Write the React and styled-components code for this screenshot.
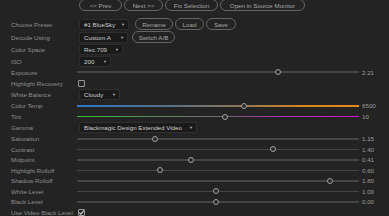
import React from "react";
import styled, { createGlobalStyle } from "styled-components";

const GlobalStyle = createGlobalStyle`
  html, body {
    margin: 0;
    padding: 0;
    background: #232323;
    overflow: hidden;
  }
  body {
    font-family: "Liberation Sans", Arial, sans-serif;
  }
`;

const sliders = {
  exposure: { pos: 0.713, value: "2.21" },
  temp: { pos: 0.592, value: "6500" },
  tint: { pos: 0.525, value: "10" },
  saturation: { pos: 0.277, value: "1.15" },
  contrast: { pos: 0.695, value: "1.40" },
  midpoint: { pos: 0.404, value: "0.41" },
  hiRolloff: { pos: 0.294, value: "0.60" },
  shRolloff: { pos: 0.897, value: "1.80" },
  white: { pos: 0.493, value: "1.00" },
  black: { pos: 0.493, value: "0.00" },
};

function Dropdown({ w, children }) {
  return (
    <Select $w={w}>
      <span>{children}</span>
      <Arrow>▼</Arrow>
    </Select>
  );
}

function Slider({ pos, value, track }) {
  return (
    <SliderWrap>
      <Track $bg={track}>
        <Thumb style={{ left: `${pos * 100}%` }} />
      </Track>
      <Value>{value}</Value>
    </SliderWrap>
  );
}

function Check({ checked }) {
  return (
    <Box>
      {checked && (
        <svg width="7" height="7" viewBox="0 0 7 7">
          <path d="M1.3 3.6 L2.9 5.1 L5.8 1.6" fill="none" stroke="#d8d8d8" strokeWidth="1.1" />
        </svg>
      )}
    </Box>
  );
}

export default function App() {
  return (
    <Panel>
      <GlobalStyle />
      <TopBar>
        <Pill $w={43}>&lt;&lt; Prev</Pill>
        <Pill $w={39}>Next &gt;&gt;</Pill>
        <Pill $w={53}>Fix Selection</Pill>
        <Pill $w={85}>Open in Source Monitor</Pill>
      </TopBar>

      <Row $h={13}>
        <Label>Choose Preset</Label>
        <Controls>
          <Dropdown w={50}>#1 BlueSky</Dropdown>
          <Pill $w={38} $ml={4}>Rename</Pill>
          <Pill $w={29}>Load</Pill>
          <Pill $w={30}>Save</Pill>
        </Controls>
      </Row>
      <Row $h={13}>
        <Label>Decode Using</Label>
        <Controls>
          <Dropdown w={49}>Custom A</Dropdown>
          <Pill $w={43} $ml={2}>Switch A/B</Pill>
        </Controls>
      </Row>
      <Row $h={12}>
        <Label>Color Space</Label>
        <Controls>
          <Dropdown w={44}>Rec.709</Dropdown>
        </Controls>
      </Row>
      <Row $h={11}>
        <Label>ISO</Label>
        <Controls>
          <Dropdown w={32}>200</Dropdown>
        </Controls>
      </Row>
      <Row $h={11}>
        <Label>Exposure</Label>
        <Slider {...sliders.exposure} />
      </Row>
      <Row $h={11.5}>
        <Label>Highlight Recovery</Label>
        <Controls>
          <Check />
        </Controls>
      </Row>
      <Row $h={11.5}>
        <Label>White Balance</Label>
        <Controls>
          <Dropdown w={41}>Cloudy</Dropdown>
        </Controls>
      </Row>
      <Row $h={10.5}>
        <Label>Color Temp</Label>
        <Slider
          {...sliders.temp}
          track="linear-gradient(90deg, #2d78c8 0%, #56708a 30%, #857760 55%, #d8861e 80%, #e88a14 100%)"
        />
      </Row>
      <Row $h={11}>
        <Label>Tint</Label>
        <Slider
          {...sliders.tint}
          track="linear-gradient(90deg, #30c030 0%, #5a905a 25%, #746874 50%, #b02cb0 75%, #d014d0 100%)"
        />
      </Row>
      <Row $h={11.5}>
        <Label>Gamma</Label>
        <Controls>
          <Dropdown w={118}>Blackmagic Design Extended Video</Dropdown>
        </Controls>
      </Row>
      <Row $h={10.5}>
        <Label>Saturation</Label>
        <Slider {...sliders.saturation} />
      </Row>
      <Row $h={10.5}>
        <Label>Contrast</Label>
        <Slider {...sliders.contrast} />
      </Row>
      <Row $h={10.5}>
        <Label>Midpoint</Label>
        <Slider {...sliders.midpoint} />
      </Row>
      <Row $h={10.5}>
        <Label>Highlight Rolloff</Label>
        <Slider {...sliders.hiRolloff} />
      </Row>
      <Row $h={10.5}>
        <Label>Shadow Rolloff</Label>
        <Slider {...sliders.shRolloff} />
      </Row>
      <Row $h={10.5}>
        <Label>White Level</Label>
        <Slider {...sliders.white} />
      </Row>
      <Row $h={10.5}>
        <Label>Black Level</Label>
        <Slider {...sliders.black} />
      </Row>
      <Row $h={11}>
        <Label>Use Video Black Level</Label>
        <Controls>
          <Check checked />
        </Controls>
      </Row>
    </Panel>
  );
}

const Panel = styled.div`
  width: 389px;
  height: 216px;
  overflow: hidden;
  background: #232323;
  padding-left: 11px;
  box-sizing: border-box;
  font-size: 6.2px;
`;

const TopBar = styled.div`
  display: flex;
  gap: 2px;
  height: 12px;
  margin-top: -1px;
  margin-bottom: 6.5px;
  padding-left: 68px;
`;

const Pill = styled.div`
  width: ${(p) => p.$w}px;
  height: 12px;
  margin-left: ${(p) => p.$ml || 0}px;
  box-sizing: border-box;
  border: 1px solid #656565;
  border-radius: 7px;
  color: #a6a6a6;
  display: flex;
  align-items: center;
  justify-content: center;
  white-space: nowrap;
  flex-shrink: 0;
`;

const Row = styled.div`
  display: flex;
  align-items: center;
  height: ${(p) => p.$h}px;
`;

const Label = styled.div`
  width: 66px;
  flex-shrink: 0;
  color: #8e8e8e;
  white-space: nowrap;
`;

const Controls = styled.div`
  display: flex;
  align-items: center;
  gap: 2px;
  padding-left: 2px;
`;

const Select = styled.div`
  width: ${(p) => p.$w}px;
  height: 11px;
  box-sizing: border-box;
  background: #1a1a1a;
  border: 1px solid #2e2e2e;
  border-radius: 2px;
  color: #cfcfcf;
  display: flex;
  align-items: center;
  justify-content: space-between;
  padding: 0 3px 0 4px;
  white-space: nowrap;
  flex-shrink: 0;
`;

const Arrow = styled.span`
  font-size: 4px;
  color: #b0b0b0;
`;

const SliderWrap = styled.div`
  display: flex;
  align-items: center;
  flex: 1;
`;

const Track = styled.div`
  position: relative;
  width: 282px;
  height: 1.5px;
  background: ${(p) => p.$bg || "#444444"};
`;

const Thumb = styled.div`
  position: absolute;
  top: 50%;
  width: 6px;
  height: 6px;
  box-sizing: border-box;
  border: 1.5px solid #a0a0a0;
  background: #2a2a2a;
  border-radius: 50%;
  transform: translate(-50%, -50%);
`;

const Value = styled.div`
  margin-left: 3px;
  color: #9c9c9c;
  white-space: nowrap;
`;

const Box = styled.div`
  width: 7px;
  height: 7px;
  box-sizing: border-box;
  border: 1px solid #999999;
  border-radius: 1px;
  margin-left: -1px;
  display: flex;
  align-items: center;
  justify-content: center;
  svg {
    display: block;
    margin: -1px;
  }
`;
